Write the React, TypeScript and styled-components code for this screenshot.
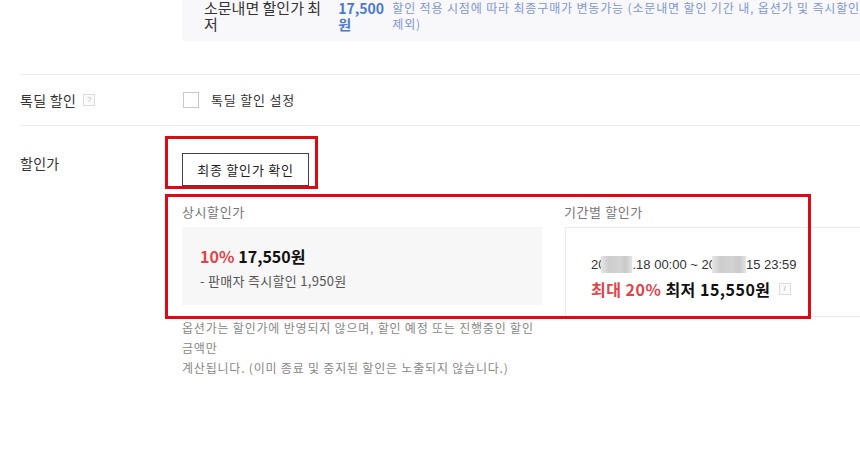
import { createGlobalStyle, styled } from 'styled-components';

const GlobalStyle = createGlobalStyle`
  html, body {
    margin: 0;
    padding: 0;
    background: #fff;
    overflow: hidden;
  }
  body {
    font-family: "Noto Sans CJK KR", "Noto Sans", sans-serif;
    color: #333;
  }
`;

const Page = styled.div`
  width: 860px;
  height: 464px;
  padding-left: 20px;
  box-sizing: border-box;
  overflow: hidden;
`;

const NoticeBox = styled.div`
  margin-left: 162px;
  height: 41px;
  padding-left: 22px;
  background: #f8f8fa;
  display: flex;
  align-items: flex-start;
  overflow: hidden;
`;

const NoticeTitle = styled.div`
  width: 136px;
  font-size: 15px;
  line-height: 16px;
  color: #333;
  padding-right: 12px;
  box-sizing: border-box;
`;

const NoticePrice = styled.div`
  width: 55px;
  font-size: 14px;
  line-height: 16px;
  font-weight: 700;
  color: #4a78d2;
`;

const NoticeDesc = styled.div`
  font-size: 12px;
  line-height: 16px;
  letter-spacing: 0.85px;
  color: #7f97d4;
  white-space: nowrap;
`;

const Row = styled.div<{ $divided?: boolean }>`
  display: grid;
  grid-template-columns: 162px 1fr;
  ${({ $divided }) =>
    $divided
      ? `
    margin-top: 33px;
    height: 52px;
    align-items: center;
    border-top: 1px solid #ececec;
    border-bottom: 1px solid #ececec;
    box-sizing: border-box;
  `
      : `
    padding-top: 27px;
    align-items: start;
  `}
`;

const Label = styled.div`
  display: flex;
  align-items: center;
  gap: 7px;
  font-size: 14px;
  line-height: 20px;
  letter-spacing: 0.3px;
  color: #333;
`;

const TipIcon = styled.span<{ $italic?: boolean }>`
  display: inline-flex;
  align-items: center;
  justify-content: center;
  width: 10px;
  height: 10px;
  border: 1px solid #dcdcdc;
  background: #fafafa;
  color: #b4b4b4;
  font-family: "Liberation Sans", sans-serif;
  font-size: 8px;
  font-weight: 400;
  letter-spacing: 0;
  font-style: ${({ $italic }) => ($italic ? 'italic' : 'normal')};
  line-height: 1;
`;

const CheckRow = styled.label`
  display: flex;
  align-items: center;
  gap: 12px;
  padding-left: 1px;
  font-size: 13px;
  line-height: 20px;
  letter-spacing: 0.8px;
  color: #333;
`;

const CheckBox = styled.span`
  width: 16px;
  height: 16px;
  box-sizing: border-box;
  border: 1px solid #c9c9c9;
  background: #fff;
`;

const Content = styled.div`
  display: flex;
  flex-direction: column;
  align-items: flex-start;
`;

const Marked = styled.div`
  position: relative;
`;

const Marker = styled.div<{ $top: number; $left: number; $right: number; $bottom: number }>`
  position: absolute;
  top: ${({ $top }) => $top}px;
  left: ${({ $left }) => $left}px;
  right: ${({ $right }) => $right}px;
  bottom: ${({ $bottom }) => $bottom}px;
  border: 3px solid #dc0a12;
  pointer-events: none;
`;

const CheckButton = styled.button`
  display: block;
  width: 127px;
  height: 33px;
  padding: 0;
  border: 1px solid #444;
  background: #fff;
  font-family: inherit;
  font-size: 13px;
  letter-spacing: 0.8px;
  color: #222;
  cursor: pointer;
`;

const Panels = styled(Marked)`
  margin-top: 17px;
  width: 678px;
  display: grid;
  grid-template-columns: 360px 1fr;
  column-gap: 22px;
  align-items: start;
`;

const PanelLabel = styled.div`
  font-size: 13px;
  line-height: 18px;
  letter-spacing: 0.6px;
  color: #777;
  margin-bottom: 6px;
`;

const RegularBox = styled.div`
  height: 78px;
  box-sizing: border-box;
  padding: 18px 18px 0;
  background: #f7f7f7;
`;

const PeriodCard = styled.div`
  height: 90px;
  margin-left: 1px;
  margin-right: -6px;
  box-sizing: border-box;
  padding: 28px 0 0 25px;
  background: #fff;
  border: 1px solid #ededed;
  box-shadow: 0 0 2px rgba(0, 0, 0, 0.04);
`;

const PriceLine = styled.div<{ $spacing?: number }>`
  display: flex;
  align-items: center;
  font-size: 16px;
  line-height: 22px;
  font-weight: 700;
  letter-spacing: ${({ $spacing = 0 }) => $spacing}px;
  color: #111;
  white-space: nowrap;
`;

const Accent = styled.span`
  color: #e2434b;
  margin-right: 4px;
`;

const SubLine = styled.div`
  margin-top: 5px;
  font-size: 13px;
  line-height: 18px;
  letter-spacing: 0.3px;
  color: #555;
`;

const DateLine = styled.div`
  display: flex;
  align-items: center;
  font-family: "Liberation Sans", "Noto Sans CJK KR", sans-serif;
  font-size: 13px;
  line-height: 16px;
  color: #333;
  white-space: pre;
  margin-bottom: 5px;
`;

const Blur = styled.span<{ $width: number }>`
  display: inline-block;
  width: ${({ $width }) => $width}px;
  height: 17px;
  margin-left: -4px;
  background: linear-gradient(
    90deg,
    #e6e6e6 0%,
    #cdcdcd 25%,
    #d3d3d3 60%,
    #c9c9c9 80%,
    #e4e4e4 100%
  );
  filter: blur(0.6px);
`;

const Gap = styled.span`
  width: 8px;
`;

const Note = styled.div`
  margin-top: 1px;
  font-size: 12px;
  line-height: 20px;
  letter-spacing: 0.8px;
  color: #888;
`;

export default function App() {
  return (
    <>
      <GlobalStyle />
      <Page>
        <NoticeBox>
          <NoticeTitle>소문내면 할인가 최저</NoticeTitle>
          <NoticePrice>
            17,500
            <br />원
          </NoticePrice>
          <NoticeDesc>
            할인 적용 시점에 따라 최종구매가 변동가능 (소문내면 할인 기간 내, 옵션가 및 즉시할인
            <br />
            제외)
          </NoticeDesc>
        </NoticeBox>

        <Row $divided>
          <Label>
            톡딜 할인 <TipIcon>?</TipIcon>
          </Label>
          <CheckRow>
            <CheckBox />
            톡딜 할인 설정
          </CheckRow>
        </Row>

        <Row>
          <Label>할인가</Label>
          <Content>
            <Marked>
              <CheckButton>최종 할인가 확인</CheckButton>
              <Marker $top={-17} $left={-17} $right={-9} $bottom={-3} />
            </Marked>

            <Panels>
              <div>
                <PanelLabel>상시할인가</PanelLabel>
                <RegularBox>
                  <PriceLine>
                    <Accent>10%</Accent>17,550원
                  </PriceLine>
                  <SubLine>- 판매자 즉시할인 1,950원</SubLine>
                </RegularBox>
              </div>
              <div>
                <PanelLabel>기간별 할인가</PanelLabel>
                <PeriodCard>
                  <DateLine>
                    20<Blur $width={31} />.18 00:00 ~ 20<Blur $width={34} />15 23:59
                  </DateLine>
                  <PriceLine $spacing={0.5}>
                    <Accent>최대 20%</Accent>최저 15,550원
                    <Gap />
                    <TipIcon $italic>i</TipIcon>
                  </PriceLine>
                </PeriodCard>
              </div>
              <Marker $top={-9} $left={-17} $right={49} $bottom={-2} />
            </Panels>

            <Note>
              옵션가는 할인가에 반영되지 않으며, 할인 예정 또는 진행중인 할인
              <br />
              금액만
              <br />
              계산됩니다. (이미 종료 및 중지된 할인은 노출되지 않습니다.)
            </Note>
          </Content>
        </Row>
      </Page>
    </>
  );
}
